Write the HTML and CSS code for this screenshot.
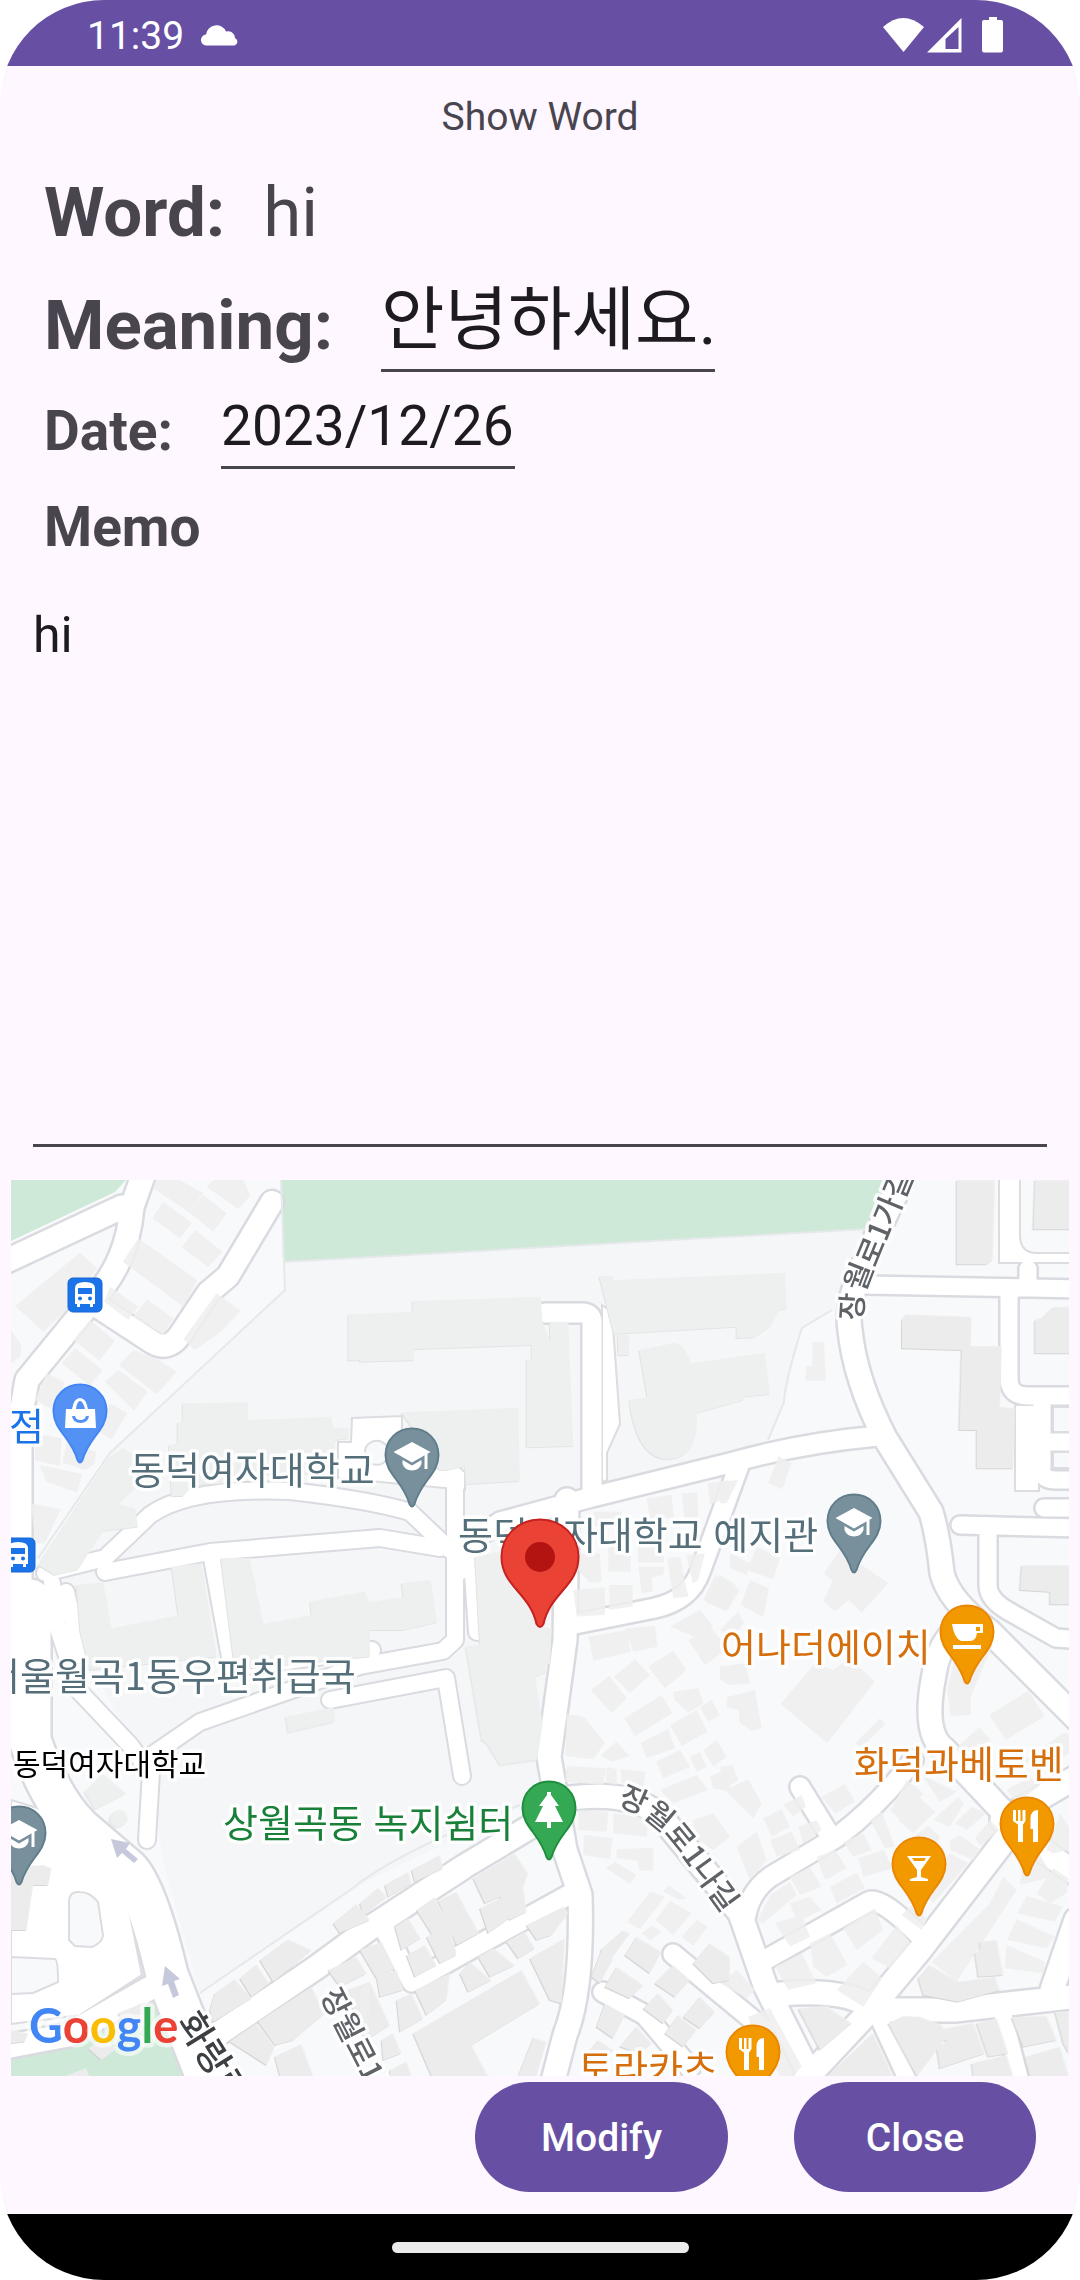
FILE: index.html
```html
<!DOCTYPE html>
<html lang="ko">
<head>
<meta charset="utf-8">
<meta name="viewport" content="width=device-width, initial-scale=1">
<title>Show Word</title>
<link rel="stylesheet" href="styles.css">
</head>
<body>
<div class="phone">
  <header class="status">
    <span class="clock">11:39</span>
    <svg class="cloud" viewBox="0 0 38 22" width="38" height="22" aria-hidden="true"><path d="M6 21.500A5.500 5.500 0 0 1 5 10.500A10.500 10.500 0 0 1 25 7.500A7 7 0 0 1 34 14A4 4 0 0 1 33.500 21.500Z"/></svg>
    <svg class="signals" viewBox="0 0 122 38" width="122" height="38" aria-hidden="true">
      <path d="M1 11Q21-7 42 11L21.500 36Z"/>
      <path fill-rule="evenodd" d="M45 36.500L79.500 2V36.500ZM63.500 33H76.500V11L63.500 23Z"/>
      <path d="M107 1H115V4H119Q121 4 121 6V34Q121 36.500 119 36.500H102Q100 36.500 100 34V6Q100 4 102 4H107Z"/>
    </svg>
  </header>

  <main class="app">
    <h1 class="title">Show Word</h1>
    <form class="entry">
      <div class="row row-word">
        <span class="label big">Word:</span>
        <span class="value big">hi</span>
      </div>
      <div class="row">
        <label class="label big" for="meaning">Meaning:</label>
        <input class="field big meaning" id="meaning" type="text" value="안녕하세요.">
      </div>
      <div class="row">
        <label class="label" for="date">Date:</label>
        <input class="field date" id="date" type="text" value="2023/12/26">
      </div>
      <label class="label memo-label" for="memo">Memo</label>
      <textarea class="memo" id="memo">hi</textarea>
    </form>

    <svg class="map" viewBox="11 1180 1058 896" role="img" aria-label="Map">
      <defs>
        <path id="pin" d="M28 1.500C13 1.500 1.500 13 1.500 28C1.500 47 19 54 25.500 77Q28 82 30.500 77C37 54 54.500 47 54.500 28C54.500 13 43 1.500 28 1.500Z"/>
        <g id="cap"><path d="M28 15L46.500 25L28 35.500L9.500 25Z"/><path d="M18.500 33L28 38.500L37.500 33V37Q35 43.500 28 43.500T18.500 37Z"/><path d="M40.500 27H43.500V42H40.500Z"/></g>
        <g id="fork"><path d="M14 14H17V25H19V14H21.500V25H23.500V14H26.500V25L24 28.500V46H19V28.500L14 25Z M39 14V46H34V33H31.500V22Q32 14 39 14Z"/></g>
        <g id="bus"><rect x="1" y="1" width="34" height="34" rx="5"/><path fill="#fff" stroke="none" fill-rule="evenodd" d="M8 11Q8 5 18 5T28 11V27H26V30H23V27H13V30H10V27H8ZM11 11V17H25V11ZM13 19.500A2 2 0 1 0 13 23.500A2 2 0 1 0 13 19.500ZM23 19.500A2 2 0 1 0 23 23.500A2 2 0 1 0 23 19.500Z"/></g>
        <path id="way-a" d="M863 1321Q860 1290 879 1260L916 1170"/>
        <path id="way-b" d="M617 1804L633 1811Q655 1822 674 1846L724 1915"/>
        <path id="way-c" d="M320 1995L372 2097"/>
        <path id="way-d" d="M176 2022L228 2106"/>
        <g id="roads">
          <path class="w24" d="M0 1264L122 1207M145 1170L132 1207Q128 1255 103 1287L27 1380L20 1420V1620"/>
          <path class="w22" d="M88 1300L152 1342Q168 1352 180 1335L208 1293L228 1276L272 1202"/>
          <path class="w20" d="M545 1313H582Q592 1313 592 1322V1490M905 1180L870 1250"/>
          <path class="w20" d="M460 1570L474 1540L500 1522L592 1497L730 1463Q800 1443 878 1436M740 1463L700 1572Q690 1600 655 1608L575 1624"/>
          <path class="w24" d="M905 1170L868 1255Q845 1300 850 1330Q855 1380 885 1438L931 1512Q938 1535 942 1573Q948 1600 990 1632L1080 1722M953 1632Q937 1650 934 1675Q922 1735 945 1750L1006 1815"/>
          <path class="w18" d="M865 1285L1080 1289M1028 1269V1287M1009 1290V1378Q1009 1396 1028 1396H1080M1042 1400V1470Q1042 1480 1056 1480H1080M1042 1442H1080M960 1525L1080 1528M1044 1508H1080M988 1530V1585Q988 1600 1010 1612L1056 1638L1080 1640"/>
          <path class="w24" d="M567 1500L565 1640L549 1757L565 1850L580 1895Q583 1990 565 2035L552 2085"/>
          <path class="w24" d="M215 2036L317 1967L370 1928L465 1866L560 1809M570 1798Q635 1790 662 1818L740 1913L765 1985L815 2085"/>
          <path class="w20" d="M572 1893L487 1940L412 1982L385 1930M673 1954L765 2030M603 1992L645 2015L690 2068"/>
          <path class="w20" d="M800 1787L829 1834M913 1760Q880 1805 837 1837L770 1877Q750 1892 746 1915M765 1960L868 1902Q880 1895 922 1938"/>
          <path class="w24" d="M1007 1837L920 1950L864 2017L805 2080M1002 1820L1080 1775M1010 1828L1078 1875M780 1994Q850 1988 875 2010L955 2010L1080 1996M1076 1920L1052 1990"/>
          <path class="w18" d="M1003 2015L1021 2085M880 2020L910 2085"/>
          <path class="w40" d="M30 1600V1740Q50 1800 80 1829L128 1870Q147 1890 167 1975L210 2085"/>
          <path class="w24" d="M150 1988L68 2035L0 2048"/>
        </g>
        <g id="paths">
          <path d="M45 1573L105 1558L150 1515Q190 1487 290 1491Q370 1500 410 1512L450 1550"/>
          <path d="M105 1572L210 1552L380 1538L440 1548M455 1475V1640L443 1651L360 1666L200 1722L152 1755L147 1840M472 1560L477 1632"/>
          <path d="M52 1583L57 1625L78 1690L130 1745L148 1770M66 1592L82 1660M211 1553L232 1668M330 1700L446 1678L462 1776M232 1668L372 1650"/>
        </g>
      </defs>

      <rect class="ground" x="11" y="1180" width="1058" height="896"/>
      <path class="campus" d="M283 1262L868 1229L832 1310L802 1327L785 1400L768 1440L560 1500L550 1620L535 1800L370 1880L200 1993L165 1870L150 1780L45 1575L38 1558L110 1453L285 1290Z"/>
      <path class="green" d="M11 1180H126L115 1192L11 1241ZM281 1180H885L868 1229L283 1262ZM11 2076V2060L70 2042L155 1994L195 2076Z"/>

      <g class="casing"><use href="#paths" class="thin"/><use href="#roads" class="thick"/></g>
      <g class="lot">
        <path d="M602 1305L612 1312L620 1424L607 1453V1480L602 1482ZM352 1418L402 1416V1465L465 1471V1490L338 1478V1442H351ZM999 1175V1263H1075V1253H1035Q1020 1252 1020 1235V1175ZM1015 1405V1491H1039V1405ZM11 1800L60 1815L125 1890L142 1975L80 2015L11 2024Z"/>
      </g>
      <use href="#paths" class="paving thin"/><use href="#roads" class="paving thick"/>
      <path class="island" d="M69 1900Q70 1891 80 1892Q90 1892 98 1902L103 1935Q103 1942 92 1947L75 1946L69 1940ZM11 1957L55 1959Q58 1960 58 1982L33 1993L11 1994ZM365 1450A12 12 0 1 1 367 1460ZM1053 1407H1075V1432H1053ZM1053 1452H1075V1468H1053Z"/>

      <g class="blocks">
        <g transform="translate(0 1170) scale(.3333)">
          <path d="M470 30H540L610 70L565 125L460 55ZM640 30H730L752 75L715 118L620 50ZM610 75L680 130L640 185L565 125ZM490 95L575 158L540 205L457 145ZM585 180L668 245L625 292L545 232ZM415 205L592 330L550 410L368 275ZM240 248L292 295L200 420L130 485L45 408ZM330 350L415 410L385 450L312 395ZM440 388L520 445L490 495L400 440ZM650 370L722 422L660 488L585 540L550 508ZM270 450L345 512L298 572L220 510ZM225 535L308 600L270 648L185 580ZM400 540L480 572L530 605L470 673L357 585ZM355 600L443 665L402 722L315 635ZM140 610L193 635L180 700L150 715L105 690ZM330 700L382 730L335 808L290 780ZM105 790L185 805L180 888L105 870ZM200 815L288 845L285 880L258 900L188 878ZM118 885L247 912L232 968L140 935ZM93 1000L182 1018L135 1120H105ZM33 480L65 525L60 560L33 580Z"/>
        </g>
        <g transform="translate(360 1170) scale(.3333)">
          <path d="M700 1025H785L780 1070H700ZM860 985L935 975L942 1045H870ZM965 970L1012 968L1015 1045L975 1055ZM1042 940L1105 930L1110 985L1050 1003ZM660 1150H720L725 1235L690 1238L655 1200ZM745 1130H812V1205H745ZM832 1120H912V1178H835ZM835 1190H912L910 1215L875 1222L878 1265L845 1270ZM922 1165L960 1160L985 1280L940 1285ZM980 1155L1035 1150L1015 1230L998 1240ZM640 1260L735 1252V1335L650 1340ZM748 1245H818V1310L748 1320ZM1065 1215L1140 1260L1100 1325L1030 1290ZM1020 1320L1060 1370L1000 1400L930 1370Z"/>
        </g>
        <g transform="translate(720 1170) scale(.3333)">
          <path d="M175 858L215 880L187 958L145 938ZM0 935L55 930L20 1000H0ZM277 517L312 515L318 632H257L258 590L277 587ZM360 1140L505 1240L425 1328L385 1290L345 1325L310 1293L338 1232L312 1210ZM110 1130L180 1165L160 1228L80 1200ZM90 1230L147 1255L130 1342L62 1305ZM30 1150L90 1180L80 1215L30 1195ZM0 1215L48 1245L20 1320L-40 1300ZM55 1325L72 1360L40 1400L0 1380Z"/>
        </g>
        <g transform="translate(360 1620) scale(.3333)">
          <path d="M685 50L800 30L812 95L700 122ZM795 25L885 18L893 80L820 95ZM985 60L1050 20L1105 85L1035 135ZM940 92L980 150L915 205L865 140ZM825 118L870 165L810 220L762 170ZM748 168L800 235L755 280L692 210ZM905 225L937 280L825 348L793 295ZM620 283L672 290L735 368L700 418L617 408ZM940 215L1015 205L1030 250L985 278L942 238ZM1020 260L1055 240L1080 285L1045 305ZM930 315L1010 270L1042 335L965 378ZM842 368L925 328L945 385L860 415ZM770 365L808 408L755 425L722 405ZM888 425L960 390L990 440L910 475ZM1030 390L1070 360L1100 410L1060 440ZM990 410L1020 395L1040 440L1010 455ZM620 438L738 445L730 495L615 485ZM740 440L770 448V495L738 488ZM782 448L857 455L850 505L785 490ZM1050 470L1105 445L1110 515L1060 505ZM900 510L1010 465L1045 510L940 550ZM655 570L745 575L740 635L655 630ZM760 580L865 595L860 650L760 640ZM672 645L758 655L750 718L670 705ZM770 688L880 683V752H838L833 722L770 715ZM765 725L830 765L810 792L738 745ZM870 815L915 830L840 928L802 905ZM925 795L980 835L960 840L910 815ZM930 842L995 880L940 945L887 900ZM875 918L905 935L870 960L845 940ZM1010 900L1042 920L1000 978L965 950ZM1000 600L1060 580L1110 650L1060 690L1000 650Z"/>
        </g>
        <g transform="translate(720 1620) scale(.3333)">
          <path d="M285 130L340 150L390 112L464 185L322 370L182 252ZM20 232L105 210L125 325L95 332L60 310L55 270L20 262ZM0 140L75 130L92 190L30 195L0 180ZM0 440L38 435L55 480L10 510ZM480 295L497 312L425 380L405 370ZM700 130L820 70L752 230V285L692 288L682 210ZM925 212L975 288L858 360L808 285ZM778 322L812 360L720 410L708 385ZM1030 338L1047 340V400L980 440L905 425ZM15 510L85 478L125 550L100 595ZM130 595L185 568L210 620L155 650ZM190 555L245 525L258 560L220 590ZM150 660L215 635L240 690L170 710ZM235 620L290 600L305 630L250 670ZM50 680L110 635L140 720L90 780ZM305 530L375 492L405 545L345 580ZM290 710L345 690L380 745L315 780ZM370 665L430 640L455 690L400 710ZM415 715L490 690L520 745L430 770ZM210 770L270 742L305 800L240 825ZM330 800L410 758L435 805L350 850ZM450 600L485 575L525 680L495 685ZM560 480L610 520L540 600L512 570ZM595 530L645 575L580 640L535 600ZM605 465L710 515L660 545ZM640 600L715 530L732 550L690 620ZM705 610L755 560L800 580L740 630ZM765 655L810 600L840 630L780 678ZM690 660L720 645L782 690L760 720L690 690ZM580 650L625 618L660 650L640 700ZM150 825L210 785L230 825L130 910L110 905ZM210 850L270 830L305 870L230 905ZM165 910L245 885L270 950L210 980ZM370 925L465 865L490 930L410 990ZM530 915L572 970L510 1045L455 1015ZM270 970L330 940L383 1035L320 1070L280 1040ZM165 1040L245 1000L290 1090L205 1110ZM430 1025L487 1075L430 1160L350 1110ZM545 885L580 850L620 900L605 930ZM810 850L850 770L890 810L710 1085L635 1025ZM910 725L950 690L1000 770L900 795ZM1000 745L1045 775L1040 820L990 850L950 820ZM920 828L1028 860L1005 905L892 880ZM890 898L1005 950L980 985L862 960ZM860 975L975 1025L970 1060L855 1045ZM860 510L930 470L955 500L890 550ZM980 690L1020 580L1047 620V690L1000 700ZM0 1090L50 1050L105 1110L80 1135ZM85 1190L150 1165L245 1340L220 1368H180L100 1240ZM650 745L690 700L745 730L640 850L610 820Z"/>
        </g>
      </g>

      <g class="halls">
        <g transform="translate(0 1170) scale(.3333)">
          <path d="M548 700L745 697V750L995 740L1000 772L1045 775L1047 805L1005 810V910L670 915V940L580 945L550 978H515L507 825L533 820V757H548ZM370 835L410 860V950L355 1003L405 1015L415 1070L310 1082L235 1198L165 1215L115 1185L330 860ZM230 1245L310 1237L335 1375L515 1340L535 1335L515 1190L605 1180L650 1460L270 1500L240 1380ZM663 1165L750 1165L790 1362L935 1335L930 1295L1095 1265L1110 1300V1460L705 1500ZM1045 433H1240V571H1045Z"/>
        </g>
        <g transform="translate(360 1170) scale(.3333)">
          <path d="M0 432L158 425V393L542 380L548 455L570 513V455H625L640 828L500 832V568H515V525L163 538V570L0 575ZM125 727L475 713L480 933L318 942L315 888L260 900H240ZM125 1240L212 1230L232 1357L130 1380H0V1300L130 1282ZM345 1160L440 1140L540 1370L575 1375L570 1480L365 1510ZM718 318H760V330L1275 308L1280 415L1260 420L1230 470L1185 502L1130 505V470L762 492ZM773 495H808V555H775ZM838 540L945 518Q980 530 993 580L1215 548L1230 672L1150 680V690L1010 730Q1020 860 930 868Q830 870 808 690L862 682Z"/>
        </g>
        <g transform="translate(360 1620) scale(.3333)"><path d="M317 80L490 55L503 82L545 80L560 155L525 170L548 310L530 420L420 435L380 370L365 360Z"/></g>
        <g transform="translate(0 1620) scale(.3333)"><path d="M857 290L1000 262L1005 305L865 338ZM253 515L310 462L378 520L285 568ZM330 590Q345 565 365 570Q390 580 380 605Q350 640 328 600Z"/></g>
      </g>

      <g class="towers">
        <g transform="translate(720 1170) scale(.3333)">
          <path d="M725 30H825L818 270L800 283H710V30ZM945 30H1060V178H940ZM560 433L755 440L752 528H845L840 710L885 715L880 895H770V780H718L725 540L545 535V450ZM1000 410H1060V550H945V450L970 440ZM905 1185H1060V1303H990V1265L900 1260Z"/>
        </g>
        <g transform="translate(0 1620) scale(.3333)">
          <path d="M33 740L130 735L155 745L145 795H100L80 930L33 930ZM645 1120L705 1078L755 1135L640 1205L630 1170ZM720 1075L770 1033L808 1090L755 1130ZM780 1020L865 958L935 990L820 1085ZM1000 910L1070 852L1110 900L1020 938ZM985 1050L1070 1010L1100 1060L1020 1100ZM775 1205L935 1100L975 1180L880 1260L825 1275ZM690 1265L770 1210L825 1280L800 1335ZM825 1310L905 1272L940 1368H840ZM1040 1110L1110 1085V1180L1070 1200ZM33 1230L85 1240L75 1265L33 1270ZM355 1180L435 1145L450 1190L385 1230ZM265 1285L320 1245L345 1290L305 1320ZM195 1368L258 1345L268 1368Z"/>
        </g>
        <g transform="translate(360 1620) scale(.3333)">
          <path d="M0 850L55 803L80 830L10 885ZM75 795L145 755L155 790L85 830ZM155 750L240 705L250 745L165 785ZM340 775L465 700L505 760L490 800L500 875L450 900L420 830L375 850ZM235 842L290 815L358 940L290 975ZM170 870L225 832L285 945L235 975L205 925ZM105 920L145 895L182 955L125 990ZM360 865L420 835L455 890L385 940ZM140 1005L195 975L230 1035L165 1070ZM200 950L270 915L290 1005L240 1030ZM0 990L65 965L105 1045L50 1075ZM50 1070L110 1050L130 1110L60 1130ZM110 1140L155 1120L190 1195L120 1235ZM165 1110L270 1060L260 1140L200 1185ZM300 1060L330 1025L395 1080L325 1115ZM355 1010L400 985L465 1035L390 1070ZM440 965L495 935L525 985L475 1015ZM500 915L610 860L625 880L575 945L530 960ZM160 1240L485 1050L540 1150L335 1275L385 1368H215ZM510 1015L615 955L605 1150L570 1140ZM0 1110L30 1085L90 1215L20 1260L0 1230ZM520 1253L560 1265L530 1368H475ZM790 930L810 940L755 1015L722 990ZM830 950L905 995L870 1060L795 1005ZM725 990L760 1015L720 1090L695 1070ZM770 1040L850 1095L810 1135L735 1100ZM735 1150L795 1185L760 1255L710 1220ZM940 1035L990 1080L945 1130L885 1090ZM895 1120L940 1170L910 1210L850 1165ZM955 1185L1010 1230L970 1280L915 1240ZM1020 1130L1065 1175L1020 1225L970 1190ZM1050 970L1110 1010V1080L1060 1090L1000 1030ZM830 1220L875 1270L840 1300L780 1280ZM65 1260L100 1240L125 1300L70 1320ZM90 1350L140 1325L155 1368H90ZM715 1260L760 1290L740 1310L690 1290Z"/>
        </g>
        <g transform="translate(720 1620) scale(.3333)">
          <path d="M235 1165L320 1157L395 1210L300 1290ZM505 1210L550 1188L600 1190L665 1215L680 1250L590 1368ZM655 1230L760 1208L795 1300L660 1345L650 1280L680 1265ZM770 1210L830 1195L865 1300L805 1310ZM875 1192L980 1187L1010 1260L910 1280ZM915 1310L1020 1280L1047 1368H930ZM1005 1175H1047V1300L1030 1270ZM755 1330L860 1305L880 1368H760ZM780 965L830 960L850 1065L775 1070L765 1000L780 990ZM595 1075L630 1035L715 1085L825 1070L840 1110L715 1145L610 1125ZM325 1368L460 1240L520 1368Z"/>
        </g>
      </g>

      <path class="border" d="M281 1180L285 1290L110 1453L38 1558M283 1262L868 1229M832 1310L802 1328Q785 1380 784 1402L768 1440M200 1993L350 1890Q400 1850 520 1805"/>
      <g class="arrow"><path d="M111 1839L130 1843L126 1849L138 1859L134 1863L122 1853L117 1858ZM165 1966L180 1979L174 1981L179 1995L173 1998L168 1984L162 1986Z"/></g>

      <g class="poi slate">
        <text x="130" y="1484">동덕여자대학교</text>
        <text x="458" y="1549">동덕여자대학교 예지관</text>
        <text x="-15" y="1690">서울월곡1동우편취급국</text>
      </g>
      <text class="poi blue" x="9" y="1440">점</text>
      <text class="poi green-text" x="223" y="1837">상월곡동 녹지쉼터</text>
      <g class="poi orange">
        <text x="721" y="1661">어나더에이치</text>
        <text x="854" y="1778">화덕과베토벤</text>
        <text x="578" y="2082">토라카츠</text>
      </g>
      <text class="poi station" x="13" y="1775">동덕여자대학교</text>
      <g class="poi street">
        <text><textPath href="#way-a">장월로1가길</textPath></text>
        <text><textPath href="#way-b">장월로1나길</textPath></text>
        <text><textPath href="#way-c">장월로1가</textPath></text>
        <text class="avenue"><textPath href="#way-d">화랑로</textPath></text>
      </g>

      <use href="#bus" class="bus" x="67" y="1277"/><use href="#bus" class="bus" x="0" y="1537"/>
      <g transform="translate(52 1383)"><use href="#pin" class="pin-blue"/><path fill="#fff" fill-rule="evenodd" d="M14 26H20Q22 15 28 15T36 26H43L44 45H13ZM24 26H33Q31 18 28 18T24 26ZM20 33Q21 40 28.500 40T37 33H34Q33 37 28.500 37T23 33Z"/></g>
      <g transform="translate(384 1427)"><use href="#pin" class="pin-slate"/><use href="#cap" fill="#fff"/></g>
      <g transform="translate(826 1493)"><use href="#pin" class="pin-slate"/><use href="#cap" fill="#fff"/></g>
      <g transform="translate(-9 1805)"><use href="#pin" class="pin-slate"/><use href="#cap" fill="#fff"/></g>
      <g transform="translate(521 1780)"><use href="#pin" class="pin-green"/><path fill="#fff" d="M26 12H30V15L38 26H34L42 42H30V48H26V42H14L22 26H18L26 15Z"/></g>
      <g transform="translate(939 1604)"><use href="#pin" class="pin-orange"/><path fill="#fff" fill-rule="evenodd" d="M13 20H44V29H38Q37 37 31 37H22Q15 34 13 20ZM37 23V27H41V23ZM14 41H42V45H14Z"/></g>
      <g transform="translate(999 1796)"><use href="#pin" class="pin-orange"/><use href="#fork" fill="#fff"/></g>
      <g transform="translate(725 2024)"><use href="#pin" class="pin-orange"/><use href="#fork" fill="#fff"/></g>
      <g transform="translate(891 1836)"><use href="#pin" class="pin-orange"/><path fill="#fff" fill-rule="evenodd" d="M16 20H40L30 34V41L37 43V45H19V43L26 41V34ZM21 22L23 25H33L35 22Z"/></g>
      <g transform="translate(500 1518)"><path class="pin-red" d="M40 1.500C18 1.500 1.500 18 1.500 39C1.500 68 30 75 36.500 106Q40 112 43.500 106C50 75 78.500 68 78.500 39C78.500 18 62 1.500 40 1.500Z"/><circle cx="40" cy="39" r="15" fill="#b31412"/></g>

      <text class="logo" x="29" y="2043"><tspan fill="#4285f4">G</tspan><tspan fill="#ea4335">o</tspan><tspan fill="#fbbc04">o</tspan><tspan fill="#4285f4">g</tspan><tspan fill="#34a853">l</tspan><tspan fill="#ea4335">e</tspan></text>
    </svg>

    <div class="actions">
      <button class="btn" type="button">Modify</button>
      <button class="btn" type="button">Close</button>
    </div>
  </main>
  <footer class="nav"><span class="handle"></span></footer>
</div>
</body>
</html>
```
FILE: styles.css
```css
* { box-sizing: border-box; }
html { background: #fff; }
body { margin: 0; font-family: Roboto, "Noto Sans CJK KR", sans-serif; color: #49454f; }

.phone {
  display: flex;
  flex-direction: column;
  min-height: 100vh;
  overflow: hidden;
  border-radius: 104px;
  background: #fef7ff;
}

.status {
  display: flex;
  align-items: center;
  height: 66px;
  padding: 4px 76px 0 87px;
  background: #6750a4;
  color: #fff;
  font-size: 39px;
  line-height: 46px;
}
.status svg { fill: currentColor; }
.clock { padding-top: 2px; }
.cloud { margin-left: 17px; }
.signals { margin-left: auto; }

.app { display: flex; flex: 1; flex-direction: column; }
.title { margin: 28px 0 32px; font-size: 39px; font-weight: 400; line-height: 46px; text-align: center; }

.entry { display: flex; flex: 1; flex-direction: column; gap: 22px; }
.row { display: flex; align-items: center; gap: 48px; padding: 0 44px; }
.row-word { gap: 38px; margin-bottom: 4px; }
.label { font-size: 55px; font-weight: 700; line-height: 65px; }
.value { font-weight: 400; }
.label.big, .value.big, .field.big { font-size: 69px; line-height: 81px; }
.memo-label { margin-top: 4px; padding: 0 44px; }
.field, .memo {
  margin: 0;
  border: 0;
  border-bottom: 3px solid #49454f;
  border-radius: 0;
  outline: 0;
  background: transparent;
  color: #1d1b20;
  font-family: inherit;
}
.field { height: 75px; padding: 0 0 8px; font-size: 55px; line-height: 64px; }
.field.big { height: 93px; padding-bottom: 20px; }
.meaning { width: 334px; }
.date { width: 294px; }
.memo {
  flex: 1;
  min-height: 240px;
  margin: 24px 33px 0;
  padding: 0;
  font-size: 50px;
  line-height: 59px;
  resize: none;
}

.map {
  display: block;
  width: calc(100% - 22px);
  height: auto;
  margin: 33px 11px 6px;
  font-family: "Noto Sans CJK KR", sans-serif;
}
.ground, .island { fill: #f8f9fb; }
.island { stroke: #dcdce1; stroke-width: 2; }
.campus { fill: #f5f6f8; }
.green { fill: #cee9d7; }
.border { fill: none; stroke: #e6e8ea; stroke-width: 2; }
#roads, #paths { fill: none; stroke-linecap: round; stroke-linejoin: round; }
.casing { stroke: #dadbe0; }
.paving { stroke: #fff; }
.lot { fill: #fff; stroke: #dcdce1; stroke-width: 2; }
.thin { stroke-width: 16px; }
.casing .thin { stroke-width: 20px; }
.thick { --edge: 0px; }
.casing .thick { --edge: 5px; }
.w18 { stroke-width: calc(17px + var(--edge)); }
.w20 { stroke-width: calc(19px + var(--edge)); }
.w22 { stroke-width: calc(22px + var(--edge)); }
.w24 { stroke-width: calc(23px + var(--edge)); }
.w40 { stroke-width: calc(41px + var(--edge)); }
.blocks { fill: #eee; fill-opacity: .85; }
.halls { fill: #eef0f0; filter: drop-shadow(-1px 1px 0 #e2e4e4); }
.towers { fill: #eee; fill-opacity: .9; filter: drop-shadow(-1px 1px 0 #d2d2d2); }
.arrow { fill: #c6c9dc; }

.poi { font-size: 38px; paint-order: stroke; stroke: #fff; stroke-opacity: .85; stroke-width: 7px; stroke-linejoin: round; }
.slate { fill: #546e7a; }
.blue { fill: #1a73e8; }
.green-text { fill: #188038; }
.orange { fill: #d56e0c; }
.station { fill: #000; font-size: 30px; }
.street { fill: #5f6368; font-size: 30px; font-weight: 500; }
.avenue { fill: #3c4043; font-size: 36px; }
.bus { fill: #1a73e8; stroke: #1967d2; }
.pin-blue { fill: #5491f5; stroke: #4285f4; stroke-width: 2; }
.pin-slate { fill: #78909c; stroke: #607d8b; stroke-width: 2; }
.pin-green { fill: #34a853; stroke: #1e8e3e; stroke-width: 2; }
.pin-orange { fill: #f29900; stroke: #ea8600; stroke-width: 2; }
.pin-red { fill: #ea4335; stroke: #c5221f; stroke-width: 2; }
.logo { font: 700 47px Lato, sans-serif; paint-order: stroke; stroke: #fff; stroke-opacity: .6; stroke-width: 9px; stroke-linejoin: round; }

.actions { display: flex; justify-content: flex-end; gap: 66px; padding: 0 44px 22px; }
.btn {
  min-width: 242px;
  height: 110px;
  padding: 2px 66px 0;
  border: 0;
  border-radius: 55px;
  background: #6750a4;
  color: #fff;
  font: 500 39px/46px Roboto, sans-serif;
}

.nav { display: flex; align-items: center; justify-content: center; height: 66px; background: #000; }
.handle { width: 297px; height: 11px; border-radius: 6px; background: #ebebeb; }
```
